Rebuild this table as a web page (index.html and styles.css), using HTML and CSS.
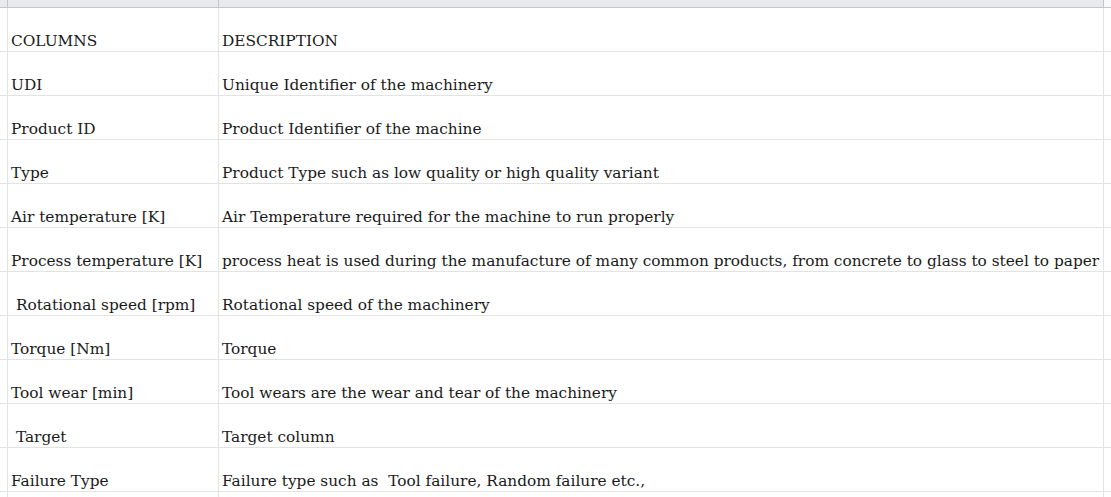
FILE: index.html
```html
<!DOCTYPE html>
<html>
<head>
<meta charset="utf-8">
<link rel="stylesheet" href="styles.css">
</head>
<body>
<div class="sheet">
  <div class="colbar">
    <div class="corner"></div>
    <div class="colhead a"></div>
    <div class="colhead b"></div>
    <div class="colhead rest"></div>
  </div>
  <div class="row"><div class="gut"></div><div class="cell a">COLUMNS</div><div class="cell b">DESCRIPTION</div><div class="cell rest"></div></div>
  <div class="row"><div class="gut"></div><div class="cell a">UDI</div><div class="cell b">Unique Identifier of the machinery</div><div class="cell rest"></div></div>
  <div class="row"><div class="gut"></div><div class="cell a">Product ID</div><div class="cell b">Product Identifier of the machine</div><div class="cell rest"></div></div>
  <div class="row"><div class="gut"></div><div class="cell a">Type</div><div class="cell b">Product Type such as low quality or high quality variant</div><div class="cell rest"></div></div>
  <div class="row"><div class="gut"></div><div class="cell a">Air temperature [K]</div><div class="cell b">Air Temperature required for the machine to run properly</div><div class="cell rest"></div></div>
  <div class="row"><div class="gut"></div><div class="cell a">Process temperature [K]</div><div class="cell b">process heat is used during the manufacture of many common products, from concrete to glass to steel to paper</div><div class="cell rest"></div></div>
  <div class="row"><div class="gut"></div><div class="cell a"> Rotational speed [rpm]</div><div class="cell b">Rotational speed of the machinery</div><div class="cell rest"></div></div>
  <div class="row"><div class="gut"></div><div class="cell a">Torque [Nm]</div><div class="cell b">Torque</div><div class="cell rest"></div></div>
  <div class="row"><div class="gut"></div><div class="cell a">Tool wear [min]</div><div class="cell b">Tool wears are the wear and tear of the machinery</div><div class="cell rest"></div></div>
  <div class="row"><div class="gut"></div><div class="cell a"> Target</div><div class="cell b">Target column</div><div class="cell rest"></div></div>
  <div class="row"><div class="gut"></div><div class="cell a">Failure Type</div><div class="cell b">Failure type such as  Tool failure, Random failure etc.,</div><div class="cell rest"></div></div>
  <div class="row"><div class="gut"></div><div class="cell a"></div><div class="cell b"></div><div class="cell rest"></div></div>
</div>
</body>
</html>
```

FILE: styles.css
```css
html, body {
  margin: 0;
  padding: 0;
  background: #ffffff;
  overflow: hidden;
}

.sheet {
  width: 1111px;
  height: 497px;
  overflow: hidden;
  font-family: "DejaVu Serif", "Liberation Serif", serif;
  font-size: 15.35px;
  color: #1a1a1a;
}

.colbar {
  display: grid;
  grid-template-columns: 8px 211px 885px 1fr;
  height: 7px;
  background: #e8eaed;
  border-bottom: 1px solid #c4c7c5;
}

.colbar > div {
  border-right: 1px solid #c4c7c5;
}

.colbar > .rest {
  border-right: none;
  background: #f8f9fa;
}

.row {
  display: grid;
  grid-template-columns: 8px 211px 885px 1fr;
  height: 43px;
  border-bottom: 1px solid #e2e3e3;
}

.gut, .cell {
  border-right: 1px solid #e2e3e3;
}

.cell {
  display: flex;
  align-items: flex-end;
  padding: 0 0 1px 3px;
  white-space: pre;
  line-height: 18px;
}

.cell.rest {
  border-right: none;
}
```
